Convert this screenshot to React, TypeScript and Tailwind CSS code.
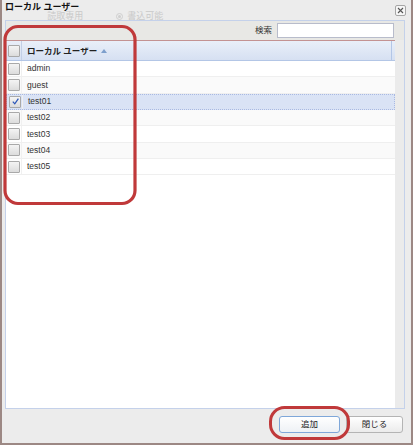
import React from "react";

const users = ["admin", "guest", "test01", "test02", "test03", "test04", "test05"];

function Check({ checked = false }: { checked?: boolean }) {
  return (
    <div className="w-[12px] h-[12px] border border-[#a9a9a9] rounded-[1px] bg-gradient-to-b from-[#f4f4f4] to-[#dcdcdc] flex items-center justify-center">
      {checked && (
        <svg width="9" height="9" viewBox="0 0 10 10">
          <path d="M2 5.2 L4.2 7.6 L8.2 1.8" fill="none" stroke="#2b56b8" strokeWidth="1.4" />
        </svg>
      )}
    </div>
  );
}

export default function App() {
  return (
    <div className="relative w-[413px] h-[445px] bg-[#ececec] border-x-2 border-b-2 border-[#9c8884] flex flex-col font-['Liberation_Sans','Noto_Sans_CJK_JP',sans-serif] text-[8.5px] text-[#333]">
      {/* title bar */}
      <div className="h-[20px] flex items-start shrink-0">
        <div className="pl-[3px] pt-[3px] text-[9px] font-bold text-[#111] leading-[8px]">ローカル ユーザー</div>
        <div className="ml-[-32px] pt-[12px] text-[9px] text-[#c9c9c9] leading-[8px]">読取専用</div>
        <div className="ml-[33px] pt-[12px] flex items-center gap-[4px] text-[9px] text-[#c9c9c9] leading-[8px]">
          <span className="w-[7px] h-[7px] rounded-full border border-[#cfcfcf] flex items-center justify-center">
            <span className="w-[3px] h-[3px] rounded-full bg-[#cfcfcf]" />
          </span>
          書込可能
        </div>
        <div className="ml-auto mr-[5px] mt-[5px] w-[11px] h-[11px] border border-[#a6a6a6] rounded-[2px] bg-[#f6f6f6] flex items-center justify-center">
          <svg width="7" height="7" viewBox="0 0 7 7">
            <path d="M1 1 L6 6 M6 1 L1 6" stroke="#555" strokeWidth="1.1" />
          </svg>
        </div>
      </div>

      {/* panel */}
      <div className="ml-[3px] mr-[6px] h-[389px] border border-[#c4d1ea] flex flex-col shrink-0">
        <div className="h-[19px] bg-[#e8e8e5] flex items-center justify-end pr-[10px] gap-[5px] shrink-0">
          <span className="text-[#333]">検索</span>
          <div className="w-[117px] h-[15px] bg-white border border-[#b8bccb]" />
        </div>
        <div className="flex flex-1 min-h-0">
          <div className="w-[389px] bg-white border-t border-[#c39292] flex flex-col">
            {/* header */}
            <div className="h-[20px] flex border-b border-[#b3c6e6] bg-gradient-to-b from-[#e9eff9] to-[#d6e0f2] shrink-0">
              <div className="w-[16px] border-r border-[#c2cfe6] flex items-center justify-center pl-[1px] pt-[1px]">
                <Check />
              </div>
              <div className="flex items-center pl-[5px] pt-[1px] gap-[4px] font-bold text-[#222] flex-1 border-r border-[#b3c6e6]">
                ローカル ユーザー
                <svg width="6" height="4" viewBox="0 0 6 4">
                  <path d="M0 4 L3 0 L6 4 Z" fill="#7d9fcc" />
                </svg>
              </div>
              <div className="w-[3px]" />
            </div>
            {users.map((u, i) => {
              const sel = u === "test01";
              const bg = sel ? "bg-[#dae3f5] border border-dotted border-[#a9b9e2]" : i % 2 === 1 ? "bg-[#fafafa] border-b border-[#efefef]" : "bg-white border-b border-[#efefef]";
              return (
                <div key={u} className={`h-[16.33px] flex items-center shrink-0 ${bg}`}>
                  <div className="w-[16px] h-full border-r border-[#f0f0f0] flex items-center justify-center pl-[1px]">
                    <Check checked={sel} />
                  </div>
                  <div className="pl-[5px]">{u}</div>
                </div>
              );
            })}
          </div>
          <div className="flex-1 bg-[#ebebeb]" />
        </div>
      </div>

      {/* footer */}
      <div className="flex-1 flex items-start justify-end pr-[8px] pt-[7px] gap-[6px]">
        <button className="w-[61px] h-[17px] rounded-[3px] border border-[#7fa7d9] bg-gradient-to-b from-white to-[#eef1f5] text-[#222] flex items-center justify-center">
          追加
        </button>
        <button className="w-[57px] h-[17px] rounded-[3px] border border-[#b4b4b4] bg-gradient-to-b from-white to-[#ebebeb] text-[#222] flex items-center justify-center">
          閉じる
        </button>
      </div>

      {/* annotation overlays */}
      <svg className="absolute left-[-2px] top-0 pointer-events-none" width="413" height="445" viewBox="0 0 413 445">
        <rect x="5" y="26.5" width="130" height="177" rx="13" fill="none" stroke="#c0393a" strokeWidth="3.2" />
        <rect x="270.5" y="407.5" width="78" height="31" rx="14" fill="none" stroke="#c0393a" strokeWidth="3" />
      </svg>
    </div>
  );
}
